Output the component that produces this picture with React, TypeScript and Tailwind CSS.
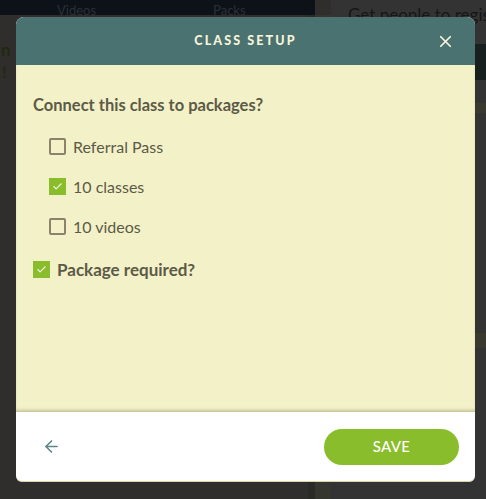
import { ArrowLeft, Check, X } from 'lucide-react'
import { useState } from 'react'

const packages = [
  { id: 'referral', label: 'Referral Pass', checked: false },
  { id: 'classes', label: '10 classes', checked: true },
  { id: 'videos', label: '10 videos', checked: false },
]

function Box({ checked }: { checked: boolean }) {
  return checked ? (
    <span className="flex size-[17px] items-center justify-center bg-[#8abd2b]">
      <Check className="size-[11px] text-[#eef5dc]" strokeWidth={2.5} />
    </span>
  ) : (
    <span className="size-[17px] rounded-[2px] border-2 border-[#8a826b]" />
  )
}

export default function App() {
  const [items, setItems] = useState(packages)
  const [required, setRequired] = useState(true)

  return (
    <div className="relative h-[499px] w-[486px] overflow-hidden bg-[#2f2e2c] font-['Lato',sans-serif]">
      {/* page behind the overlay */}
      <div className="flex h-full">
        <div className="flex w-[308px] shrink-0 flex-col">
          <div className="flex h-[15px] items-end bg-[#0d1218] text-[13px] leading-none text-[#2a3038]">
            <span className="ml-[57px] -mb-[2px]">Videos</span>
            <span className="ml-[117px] -mb-[2px]">Packs</span>
          </div>
          <div className="flex flex-col gap-[6px] pt-[27px] text-[17px] font-bold leading-[16px] text-[#1f2a10]">
            <span className="pl-[1px]">n</span>
            <span className="pl-[2px]">!</span>
          </div>
        </div>
        <div className="flex w-[23px] shrink-0 flex-col">
          <div className="h-[15px] w-[7px] bg-[#0d1218]" />
          <div className="flex flex-1">
            <div className="w-[7px] bg-[#2a2a26]" />
            <div className="w-[16px] bg-[#363631]" />
          </div>
        </div>
        <div className="flex min-w-0 flex-1 flex-col bg-[#333333] pl-[17px]">
          <span className="pt-[4px] text-[17px] leading-[22px] whitespace-nowrap text-[#161616]">
            Get people to register
          </span>
          <div className="mt-[18px] h-[36px] bg-[#18201f] pl-[140px] pt-[8px] text-[16px] text-[#333]">
            A
          </div>
          <div className="mt-[23px] h-[10px] bg-[#3a392f]" />
          <span className="mt-[165px] pl-[141px] text-[15px] text-[#141414]">ts</span>
          <div className="mt-[32px] h-[15px] bg-[#3a392f]" />
          <span className="mt-[110px] pl-[142px] text-[15px] text-[#141414]">s</span>
        </div>
      </div>

      {/* modal */}
      <div className="absolute top-[17px] left-[16px] flex h-[465px] w-[459px] flex-col overflow-hidden rounded-t-[8px] rounded-b-[6px] border-b border-[#d9d6a6] bg-white">
        <div className="relative flex h-[48px] shrink-0 items-center justify-center bg-[#4a7270]">
          <h1 className="text-[12.5px] font-black tracking-[0.17em] text-[#f7f4dc]">CLASS SETUP</h1>
          <button className="absolute right-[20px] text-[#f7f4dc]">
            <X className="size-[19px]" strokeWidth={2.2} />
          </button>
        </div>
        <div className="flex flex-1 flex-col bg-[#f3f1c8] px-[17px] pt-[30px] text-[#5c5a47] shadow-[inset_0_-3px_3px_-1px_rgba(120,110,70,0.35)]">
          <p className="text-[16.5px] leading-[20px] font-bold">Connect this class to packages?</p>
          <div className="mt-[22px] flex flex-col gap-[21px] pl-[16px]">
            {items.map((p) => (
              <label
                key={p.id}
                className="flex h-[19px] cursor-pointer items-center gap-[7px] text-[16px]"
                onClick={() =>
                  setItems((s) => s.map((q) => (q.id === p.id ? { ...q, checked: !q.checked } : q)))
                }
              >
                <Box checked={p.checked} />
                <span>{p.label}</span>
              </label>
            ))}
          </div>
          <label
            className="mt-[24px] flex h-[19px] cursor-pointer items-center gap-[7px] text-[17px] font-bold"
            onClick={() => setRequired((r) => !r)}
          >
            <Box checked={required} />
            <span>Package required?</span>
          </label>
        </div>
        <div className="flex h-[69px] shrink-0 items-center justify-between pr-[16px] pl-[26px]">
          <button className="text-[#5b8583]">
            <ArrowLeft className="size-[19px]" strokeWidth={2} />
          </button>
          <button className="h-[36px] w-[135px] rounded-full bg-[#8abd2b] text-[15px] font-medium tracking-[0.02em] text-white">
            SAVE
          </button>
        </div>
      </div>
    </div>
  )
}
